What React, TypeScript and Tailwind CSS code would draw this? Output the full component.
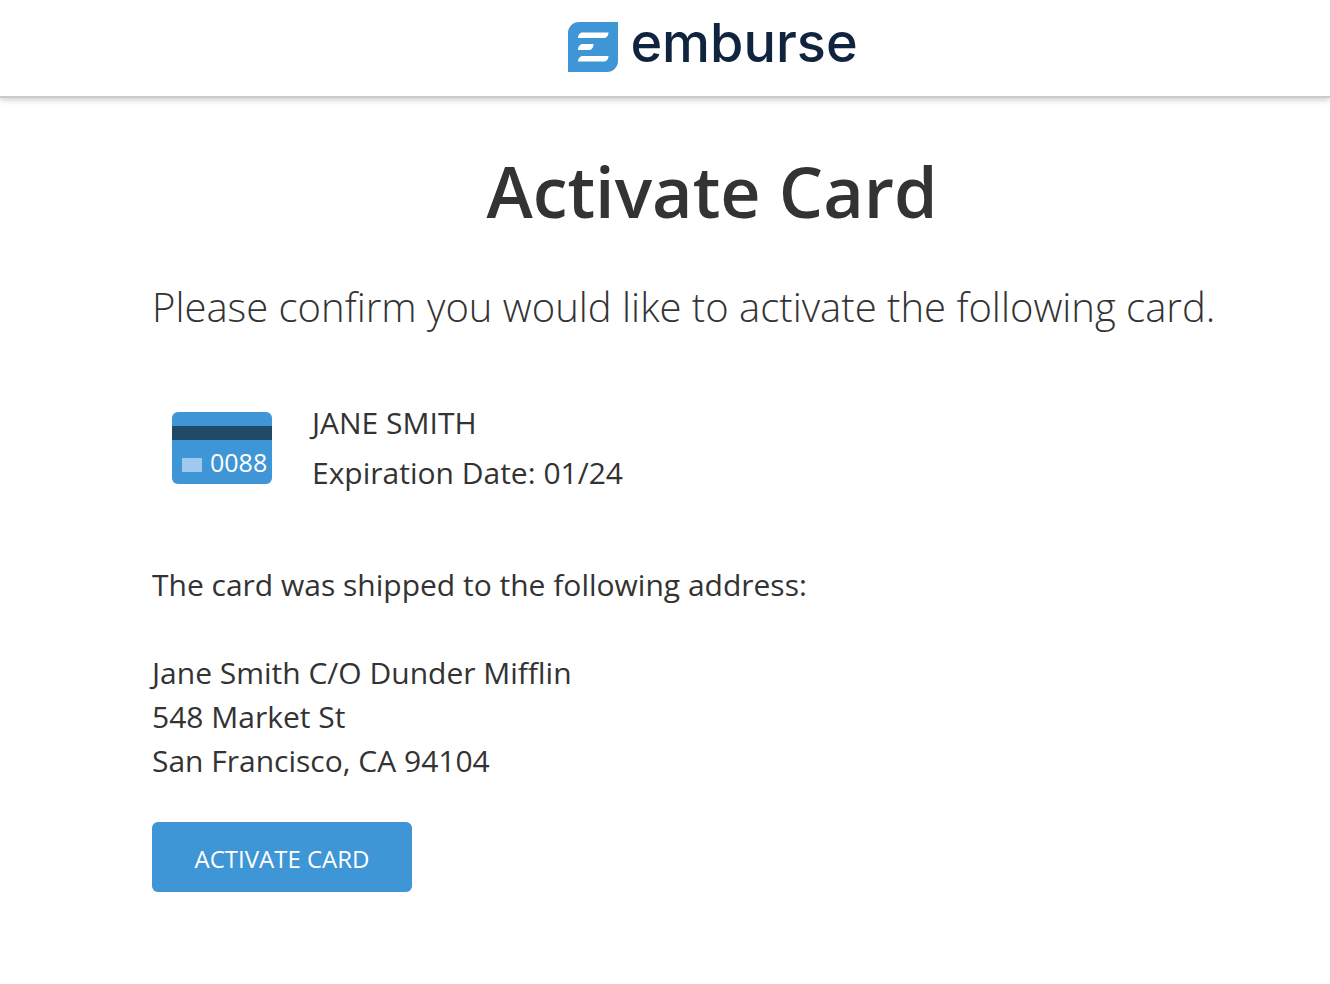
import React from "react";

const card = {
  holder: "JANE SMITH",
  expiration: "01/24",
  lastFour: "0088",
};

const address = ["Jane Smith C/O Dunder Mifflin", "548 Market St", "San Francisco, CA 94104"];

function LogoMark() {
  return (
    <svg viewBox="0 0 50 50" className="size-[50px] shrink-0" aria-hidden>
      <path d="M11 0H50V39A11 11 0 0 1 39 50H0V11A11 11 0 0 1 11 0Z" fill="#3f96d7" />
      <path
        d="M15 10.500H40.500C40.500 14 38.500 16 35.500 16H10C10 12.500 12 10.500 15 10.500Z M15 22H25.500C25.500 26 23.500 28 20.500 28H10C10 24.500 12 22 15 22Z M15 34H40.500C40.500 37.500 38.500 39.500 35.500 39.500H10C10 36.500 12 34 15 34Z"
        fill="#fff"
      />
    </svg>
  );
}

function Header() {
  return (
    <header className="flex justify-center border-b-2 border-[#cacaca] pt-[22px] pr-[58px] pb-6 pl-[154px] shadow-[0_2px_6px_rgba(0,0,0,0.2)]">
      <div className="flex items-start gap-3">
        <LogoMark />
        <span className="font-[Inter,sans-serif] text-[54px] leading-[42px] font-medium text-[#10233f]">
          emburse
        </span>
      </div>
    </header>
  );
}

function CardBadge({ lastFour }: { lastFour: string }) {
  return (
    <div className="mt-3.5 flex h-[72px] w-[100px] shrink-0 flex-col overflow-hidden rounded-md bg-[#3f96d7]">
      <div className="mt-3.5 h-3.5 shrink-0 bg-[#1f4b69]" />
      <div className="flex flex-1 items-center gap-2 pl-2.5">
        <span className="mt-1.5 h-3.5 w-5 bg-[#9fcaeb]" />
        <span className="text-[25px] leading-[44px] text-white">{lastFour}</span>
      </div>
    </div>
  );
}

export default function App() {
  return (
    <div className="min-h-screen bg-white font-['Open_Sans',sans-serif] text-[30px] leading-[44px] text-[#333]">
      <Header />
      <main className="pt-[45px] pr-[58px] pb-[92px] pl-[152px]">
        <h1 className="text-center text-[70px] leading-[96px] font-semibold">Activate Card</h1>
        <p className="mt-[38px] text-[40px] leading-[60px] font-light">
          Please confirm you would like to activate the following card.
        </p>

        <section className="mt-[61px] flex gap-10 pl-5">
          <CardBadge lastFour={card.lastFour} />
          <div className="leading-[50px]">
            <p>{card.holder}</p>
            <p>Expiration Date: {card.expiration}</p>
          </div>
        </section>

        <p className="mt-[65px]">The card was shipped to the following address:</p>
        <address className="mt-11 not-italic">
          {address.map((line) => (
            <p key={line}>{line}</p>
          ))}
        </address>

        <button
          type="button"
          className="mt-[39px] block h-[70px] w-[260px] rounded-md bg-[#3f96d7] pt-1 text-2xl text-white"
        >
          ACTIVATE CARD
        </button>
      </main>
    </div>
  );
}
